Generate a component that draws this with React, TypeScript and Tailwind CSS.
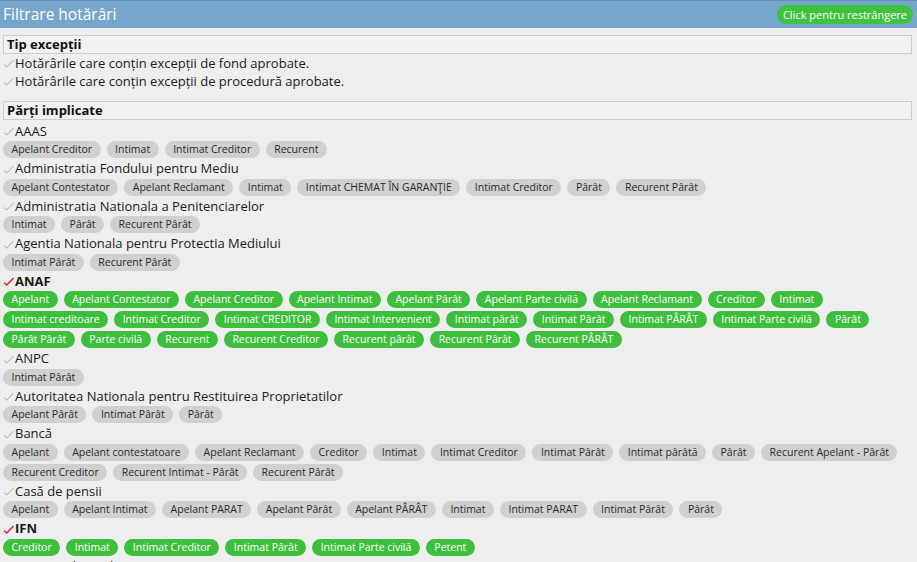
import React from "react";

interface Party {
  name: string;
  roles: string[];
  selected?: boolean;
}

const parties: Party[] = [
  { name: "AAAS", roles: ["Apelant Creditor", "Intimat", "Intimat Creditor", "Recurent"] },
  {
    name: "Administratia Fondului pentru Mediu",
    roles: ["Apelant Contestator", "Apelant Reclamant", "Intimat", "Intimat CHEMAT ÎN GARANŢIE", "Intimat Creditor", "Pârât", "Recurent Pârât"],
  },
  { name: "Administratia Nationala a Penitenciarelor", roles: ["Intimat", "Pârât", "Recurent Pârât"] },
  { name: "Agentia Nationala pentru Protectia Mediului", roles: ["Intimat Pârât", "Recurent Pârât"] },
  {
    name: "ANAF",
    selected: true,
    roles: [
      "Apelant", "Apelant Contestator", "Apelant Creditor", "Apelant Intimat", "Apelant Pârât", "Apelant Parte civilă",
      "Apelant Reclamant", "Creditor", "Intimat", "Intimat creditoare", "Intimat Creditor", "Intimat CREDITOR",
      "Intimat Intervenient", "Intimat pârât", "Intimat Pârât", "Intimat PÂRÂT", "Intimat Parte civilă", "Pârât",
      "Pârât Pârât", "Parte civilă", "Recurent", "Recurent Creditor", "Recurent pârât", "Recurent Pârât", "Recurent PÂRÂT",
    ],
  },
  { name: "ANPC", roles: ["Intimat Pârât"] },
  { name: "Autoritatea Nationala pentru Restituirea Proprietatilor", roles: ["Apelant Pârât", "Intimat Pârât", "Pârât"] },
  {
    name: "Bancă",
    roles: [
      "Apelant", "Apelant contestatoare", "Apelant Reclamant", "Creditor", "Intimat", "Intimat Creditor", "Intimat Pârât",
      "Intimat pârâtă", "Pârât", "Recurent Apelant - Pârât", "Recurent Creditor", "Recurent Intimat - Pârât", "Recurent Pârât",
    ],
  },
  {
    name: "Casă de pensii",
    roles: ["Apelant", "Apelant Intimat", "Apelant PARAT", "Apelant Pârât", "Apelant PÂRÂT", "Intimat", "Intimat PARAT", "Intimat Pârât", "Pârât"],
  },
  {
    name: "IFN",
    selected: true,
    roles: ["Creditor", "Intimat", "Intimat Creditor", "Intimat Pârât", "Intimat Parte civilă", "Petent"],
  },
  { name: "Instituții de credit", roles: ["Intimat"] },
];

const Tick = ({ on }: { on?: boolean }) => (
  <svg width="11" height="9" viewBox="0 0 11 9" className="mr-[1px] shrink-0">
    <path
      d="M1 5.5 L3.8 8 L10.5 1"
      fill="none"
      stroke={on ? "#cc3344" : "#a8a8a8"}
      strokeWidth={on ? 1.6 : 1}
    />
  </svg>
);

const SectionTitle = ({ children }: { children: React.ReactNode }) => (
  <div className="ml-[3px] mr-[5px] h-[19px] border border-[#cdcdcd] bg-[#f1f1f1] px-[3px] text-[13px] font-bold leading-[17px] text-[#111]">
    {children}
  </div>
);

export default function App() {
  return (
    <div className="h-[562px] overflow-hidden bg-[#eeeeee] font-['Open_Sans',sans-serif] text-[#1a1a1a]">
      <div className="flex h-[28px] items-center justify-between border-t border-[#5f91b8] bg-[#76a6ca] pl-[3px] pr-[4px]">
        <span className="text-[15.5px] leading-none text-white">Filtrare hotărâri</span>
        <button className="h-[19px] rounded-full bg-[#3fc23f] px-[6px] text-[11px] leading-[19px] text-white">
          Click pentru restrângere
        </button>
      </div>

      <div className="pt-[7px]">
        <SectionTitle>Tip excepții</SectionTitle>
        <div className="pl-[3px] text-[13px] leading-[18px]">
          <div className="flex items-center">
            <Tick />
            Hotărârile care conțin excepții de fond aprobate.
          </div>
          <div className="flex items-center">
            <Tick />
            Hotărârile care conțin excepții de procedură aprobate.
          </div>
        </div>

        <div className="mt-[11px]">
          <SectionTitle>Părți implicate</SectionTitle>
        </div>

        <div className="pl-[3px] pr-[5px] pt-[2px]">
          {parties.map((p) => (
            <div key={p.name} className="mb-[1.5px]">
              <div className={`flex h-[19px] items-center text-[13px] ${p.selected ? "font-bold" : ""}`}>
                <Tick on={p.selected} />
                {p.name}
              </div>
              <div className="flex flex-wrap gap-x-[6px] gap-y-[3px]">
                {p.roles.map((r, i) => (
                  <span
                    key={i}
                    className={`h-[17px] whitespace-nowrap rounded-full px-[8.5px] text-[10.5px] leading-[17px] ${
                      p.selected ? "bg-[#3dbf3d] text-white" : "bg-[#d0d0d0] text-[#2a2a2a]"
                    }`}
                  >
                    {r}
                  </span>
                ))}
              </div>
            </div>
          ))}
        </div>
      </div>
    </div>
  );
}
